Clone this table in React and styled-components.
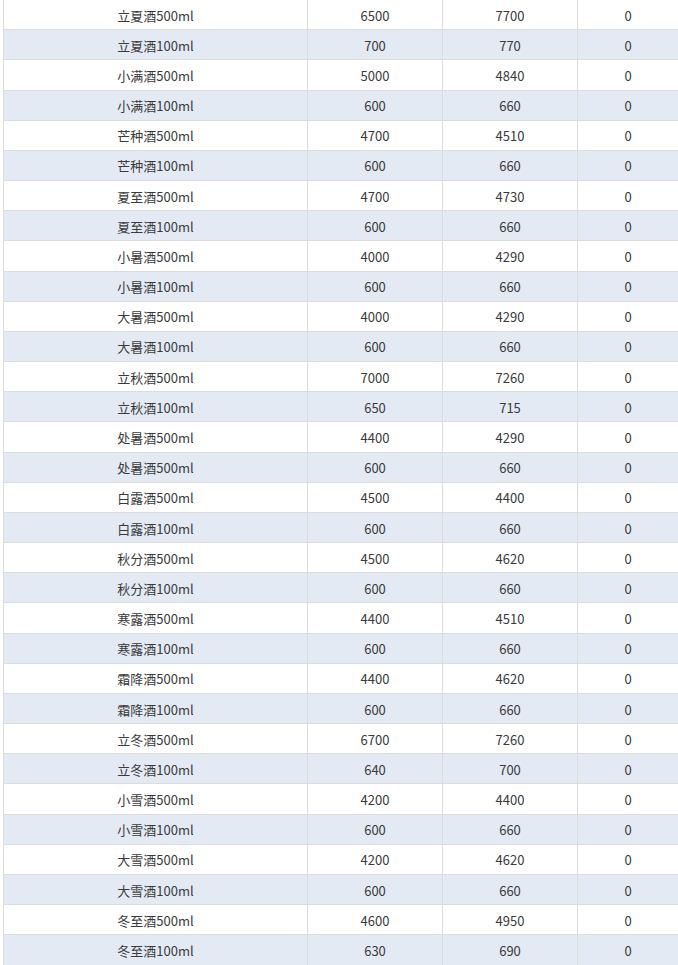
import React from "react";
import styled, { createGlobalStyle } from "styled-components";

const Global = createGlobalStyle`
  html, body { margin: 0; padding: 0; background: #fff; }
  body { font-family: "Microsoft YaHei", "Noto Sans CJK SC", "Noto Sans", sans-serif; }
`;

const Page = styled.div`
  padding-left: 3px;
  width: 678px;
  box-sizing: border-box;
  overflow: hidden;
`;

const Table = styled.div`
  display: flex;
  flex-direction: column;
  width: 675px;
`;

const Row = styled.div`
  display: grid;
  grid-template-columns: 304px 135px 135px 101px;
  height: 30.18px;
  box-sizing: border-box;
  border-bottom: 1px solid #dcdcdc;
  background: ${(p) => (p.$alt ? "#e4eaf4" : "#ffffff")};
`;

const Cell = styled.div`
  border-left: 1px solid #dcdcdc;
  display: flex;
  align-items: center;
  justify-content: center;
  padding-top: 1px;
  font-size: 13px;
  color: #3a3a3a;
  white-space: nowrap;
`;

const rows = [
  ["立夏酒500ml", 6500, 7700, 0],
  ["立夏酒100ml", 700, 770, 0],
  ["小满酒500ml", 5000, 4840, 0],
  ["小满酒100ml", 600, 660, 0],
  ["芒种酒500ml", 4700, 4510, 0],
  ["芒种酒100ml", 600, 660, 0],
  ["夏至酒500ml", 4700, 4730, 0],
  ["夏至酒100ml", 600, 660, 0],
  ["小暑酒500ml", 4000, 4290, 0],
  ["小暑酒100ml", 600, 660, 0],
  ["大暑酒500ml", 4000, 4290, 0],
  ["大暑酒100ml", 600, 660, 0],
  ["立秋酒500ml", 7000, 7260, 0],
  ["立秋酒100ml", 650, 715, 0],
  ["处暑酒500ml", 4400, 4290, 0],
  ["处暑酒500ml", 600, 660, 0],
  ["白露酒500ml", 4500, 4400, 0],
  ["白露酒100ml", 600, 660, 0],
  ["秋分酒500ml", 4500, 4620, 0],
  ["秋分酒100ml", 600, 660, 0],
  ["寒露酒500ml", 4400, 4510, 0],
  ["寒露酒100ml", 600, 660, 0],
  ["霜降酒500ml", 4400, 4620, 0],
  ["霜降酒100ml", 600, 660, 0],
  ["立冬酒500ml", 6700, 7260, 0],
  ["立冬酒100ml", 640, 700, 0],
  ["小雪酒500ml", 4200, 4400, 0],
  ["小雪酒100ml", 600, 660, 0],
  ["大雪酒500ml", 4200, 4620, 0],
  ["大雪酒100ml", 600, 660, 0],
  ["冬至酒500ml", 4600, 4950, 0],
  ["冬至酒100ml", 630, 690, 0],
];

export default function App() {
  return (
    <Page>
      <Global />
      <Table>
        {rows.map((r, i) => (
          <Row key={i} $alt={i % 2 === 1}>
            {r.map((v, j) => (
              <Cell key={j}>{v}</Cell>
            ))}
          </Row>
        ))}
      </Table>
    </Page>
  );
}
